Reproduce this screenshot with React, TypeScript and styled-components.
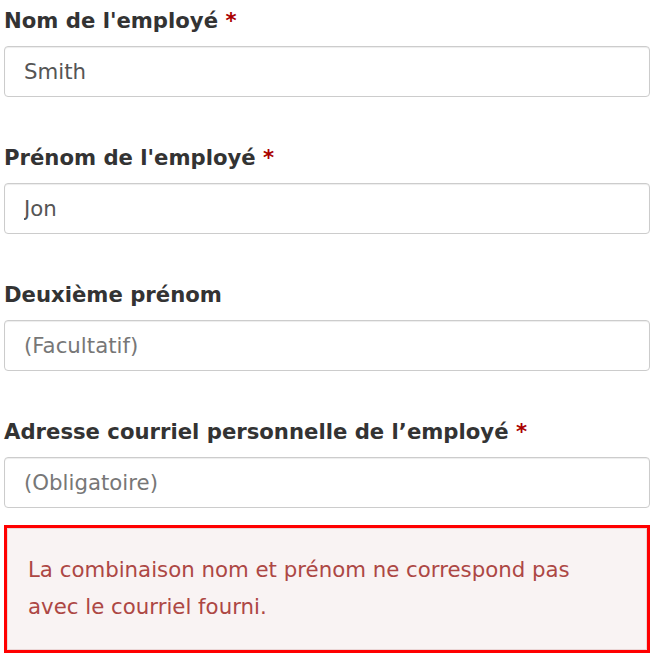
import styled, { createGlobalStyle } from 'styled-components';

const GlobalStyle = createGlobalStyle`
  body {
    margin: 0;
    background: #fff;
    font-family: 'DejaVu Sans', Verdana, sans-serif;
  }
`;

const Form = styled.form`
  width: 646px;
  padding: 9px 0 0 4px;
`;

const FieldList = styled.div`
  display: flex;
  flex-direction: column;
  gap: 49px;
`;

const Field = styled.div``;

const Label = styled.label`
  display: block;
  font-size: 21.2px;
  font-weight: bold;
  line-height: 24px;
  color: #333;
  margin-bottom: 13px;
`;

const Required = styled.span`
  color: #a00;
`;

const Input = styled.input`
  display: block;
  box-sizing: border-box;
  width: 100%;
  height: 51px;
  padding: 0 19px;
  border: 1px solid #ccc;
  border-radius: 4px;
  box-shadow: inset 0 1px 1px rgba(0, 0, 0, 0.075);
  font-family: inherit;
  font-size: 21.3px;
  color: #555;
  background: #fff;

  &::placeholder {
    color: #777;
  }
`;

const Alert = styled.div`
  margin-top: 17px;
  border: 3px solid #f00;
`;

const AlertBody = styled.div`
  border: 1px solid #ebd6d6;
  background: #f9f3f3;
  padding: 22px 20px 24px;
  font-size: 21.3px;
  line-height: 37px;
  color: #ad4744;
`;

type FieldDef = {
  label: string;
  required?: boolean;
  value?: string;
  placeholder?: string;
};

const fields: FieldDef[] = [
  { label: "Nom de l'employé", required: true, value: 'Smith' },
  { label: "Prénom de l'employé", required: true, value: 'Jon' },
  { label: 'Deuxième prénom', placeholder: '(Facultatif)' },
  {
    label: 'Adresse courriel personnelle de l’employé',
    required: true,
    placeholder: '(Obligatoire)',
  },
];

export default function App() {
  return (
    <>
      <GlobalStyle />
      <Form>
        <FieldList>
          {fields.map((f) => (
            <Field key={f.label}>
              <Label>
                {f.label} {f.required && <Required>*</Required>}
              </Label>
              <Input defaultValue={f.value} placeholder={f.placeholder} />
            </Field>
          ))}
        </FieldList>
        <Alert>
          <AlertBody>
            La combinaison nom et prénom ne correspond pas
            <br />
            avec le courriel fourni.
          </AlertBody>
        </Alert>
      </Form>
    </>
  );
}
